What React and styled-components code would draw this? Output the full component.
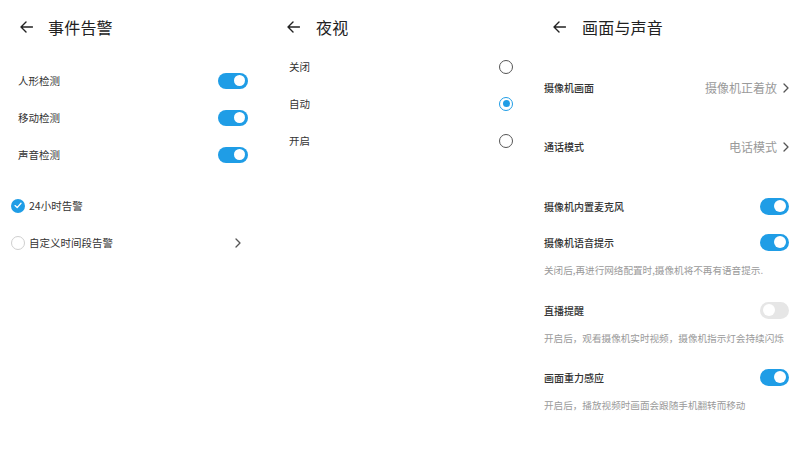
import React from "react";
import styled, { createGlobalStyle } from "styled-components";

const Global = createGlobalStyle`
  html, body { margin: 0; padding: 0; background: #fff; }
  body { font-family: "Noto Sans CJK SC", "Noto Sans", sans-serif; color: #333; }
`;

const BLUE = "#1f9de6";

const Page = styled.div`
  display: grid;
  grid-template-columns: 265px 265px 270px;
  width: 800px;
  height: 450px;
  overflow: hidden;
  background: #fff;
`;

const Panel = styled.div`
  display: flex;
  flex-direction: column;
  padding: 0 ${(p) => p.$right}px 0 ${(p) => p.$left}px;
`;

const Header = styled.div`
  display: flex;
  align-items: center;
  height: 20px;
  padding: 17px 0 11px 0;
  margin-left: ${(p) => p.$inset}px;
  gap: ${(p) => p.$gap}px;
`;

const Title = styled.div`
  font-size: 16px;
  line-height: 20px;
  color: #222;
  letter-spacing: 0.2px;
`;

const List = styled.div`
  display: flex;
  flex-direction: column;
  margin-top: ${(p) => p.$top || 0}px;
`;

const Row = styled.div`
  display: flex;
  align-items: center;
  justify-content: space-between;
  height: ${(p) => p.$h || 37}px;
`;

const CheckRow = styled(Row)`
  margin-left: -7px;
  margin-right: 7px;
`;

const Label = styled.div`
  font-size: ${(p) => p.$size || 10.5}px;
  font-weight: ${(p) => p.$weight || 400};
  color: #333;
  display: flex;
  align-items: center;
  gap: 4px;
`;

const Value = styled.div`
  display: flex;
  align-items: center;
  gap: 6px;
  font-size: 12px;
  color: #9a9a9a;
`;

const Desc = styled.div`
  font-size: 9.6px;
  line-height: 20px;
  height: 20px;
  color: #9a9a9a;
  white-space: nowrap;
  margin-bottom: ${(p) => p.$mb || 0}px;
`;

const Track = styled.div`
  position: relative;
  width: ${(p) => p.$w}px;
  height: ${(p) => p.$h}px;
  border-radius: ${(p) => p.$h / 2}px;
  background: ${(p) => (p.$on ? BLUE : "#e6e6e6")};
  flex-shrink: 0;
`;

const Knob = styled.div`
  position: absolute;
  top: 50%;
  ${(p) => (p.$on ? "right: 3px;" : "left: 3px;")}
  width: ${(p) => p.$h - 5}px;
  height: ${(p) => p.$h - 5}px;
  margin-top: ${(p) => -(p.$h - 5) / 2}px;
  border-radius: 50%;
  background: #fff;
`;

const Toggle = ({ on = true, w = 30, h = 16 }) => (
  <Track $on={on} $w={w} $h={h}>
    <Knob $on={on} $h={h} />
  </Track>
);

const CheckCircle = styled.div`
  width: 14px;
  height: 14px;
  border-radius: 50%;
  box-sizing: border-box;
  background: ${(p) => (p.$on ? BLUE : "#fff")};
  border: ${(p) => (p.$on ? "none" : "1px solid #cfcfcf")};
  display: flex;
  align-items: center;
  justify-content: center;
`;

const Radio = styled.div`
  width: 14px;
  height: 14px;
  border-radius: 50%;
  box-sizing: border-box;
  border: 1.3px solid ${(p) => (p.$on ? BLUE : "#555")};
  display: flex;
  align-items: center;
  justify-content: center;
  margin-right: 1px;
  &::after {
    content: "";
    display: ${(p) => (p.$on ? "block" : "none")};
    width: 7px;
    height: 7px;
    border-radius: 50%;
    background: ${BLUE};
  }
`;

const Back = () => (
  <svg width="13" height="12" viewBox="0 0 13 12" fill="none">
    <path d="M12.5 6H1M6 1L1 6l5 5" stroke="#222" strokeWidth="1.4" strokeLinecap="round" strokeLinejoin="round" />
  </svg>
);

const Chevron = ({ color = "#555" }) => (
  <svg width="6" height="10" viewBox="0 0 6 10" fill="none">
    <path d="M1 1l4 4-4 4" stroke={color} strokeWidth="1.3" strokeLinecap="round" strokeLinejoin="round" />
  </svg>
);

const Check = () => (
  <svg width="8" height="7" viewBox="0 0 8 7" fill="none">
    <path d="M1 3.6l2.2 2L7 1.3" stroke="#fff" strokeWidth="1.3" strokeLinecap="round" strokeLinejoin="round" />
  </svg>
);

export default function App() {
  return (
    <>
      <Global />
      <Page>
        <Panel $left={18} $right={17}>
          <Header $inset={2} $gap={15}>
            <Back />
            <Title>事件告警</Title>
          </Header>
          <List $top={14}>
            <Row><Label>人形检测</Label><Toggle /></Row>
            <Row><Label>移动检测</Label><Toggle /></Row>
            <Row><Label>声音检测</Label><Toggle /></Row>
          </List>
          <List $top={14}>
            <CheckRow>
              <Label><CheckCircle $on><Check /></CheckCircle>24小时告警</Label>
            </CheckRow>
            <CheckRow>
              <Label><CheckCircle />自定义时间段告警</Label>
              <Chevron />
            </CheckRow>
          </List>
        </Panel>

        <Panel $left={24} $right={16}>
          <Header $inset={-2} $gap={16}>
            <Back />
            <Title>夜视</Title>
          </Header>
          <List>
            <Row><Label>关闭</Label><Radio /></Row>
            <Row><Label>自动</Label><Radio $on /></Row>
            <Row><Label>开启</Label><Radio /></Row>
          </List>
        </Panel>

        <Panel $left={14} $right={11}>
          <Header $inset={9} $gap={16}>
            <Back />
            <Title>画面与声音</Title>
          </Header>
          <List $top={10}>
            <Row $h={59}>
              <Label $size={10} $weight={500}>摄像机画面</Label>
              <Value>摄像机正着放<Chevron /></Value>
            </Row>
            <Row $h={59}>
              <Label $size={10} $weight={500}>通话模式</Label>
              <Value>电话模式<Chevron /></Value>
            </Row>
          </List>
          <List $top={12}>
            <Row $h={36}>
              <Label $size={10} $weight={500}>摄像机内置麦克风</Label>
              <Toggle w={29} h={17} />
            </Row>
            <Row $h={36}>
              <Label $size={10} $weight={500}>摄像机语音提示</Label>
              <Toggle w={29} h={17} />
            </Row>
            <Desc $mb={12}>关闭后,再进行网络配置时,摄像机将不再有语音提示.</Desc>
            <Row $h={36}>
              <Label $size={10} $weight={500}>直播提醒</Label>
              <Toggle on={false} w={29} h={17} />
            </Row>
            <Desc $mb={11}>开启后，观看摄像机实时视频，摄像机指示灯会持续闪烁</Desc>
            <Row $h={36}>
              <Label $size={10} $weight={500}>画面重力感应</Label>
              <Toggle w={29} h={17} />
            </Row>
            <Desc>开启后，播放视频时画面会跟随手机翻转而移动</Desc>
          </List>
        </Panel>
      </Page>
    </>
  );
}
